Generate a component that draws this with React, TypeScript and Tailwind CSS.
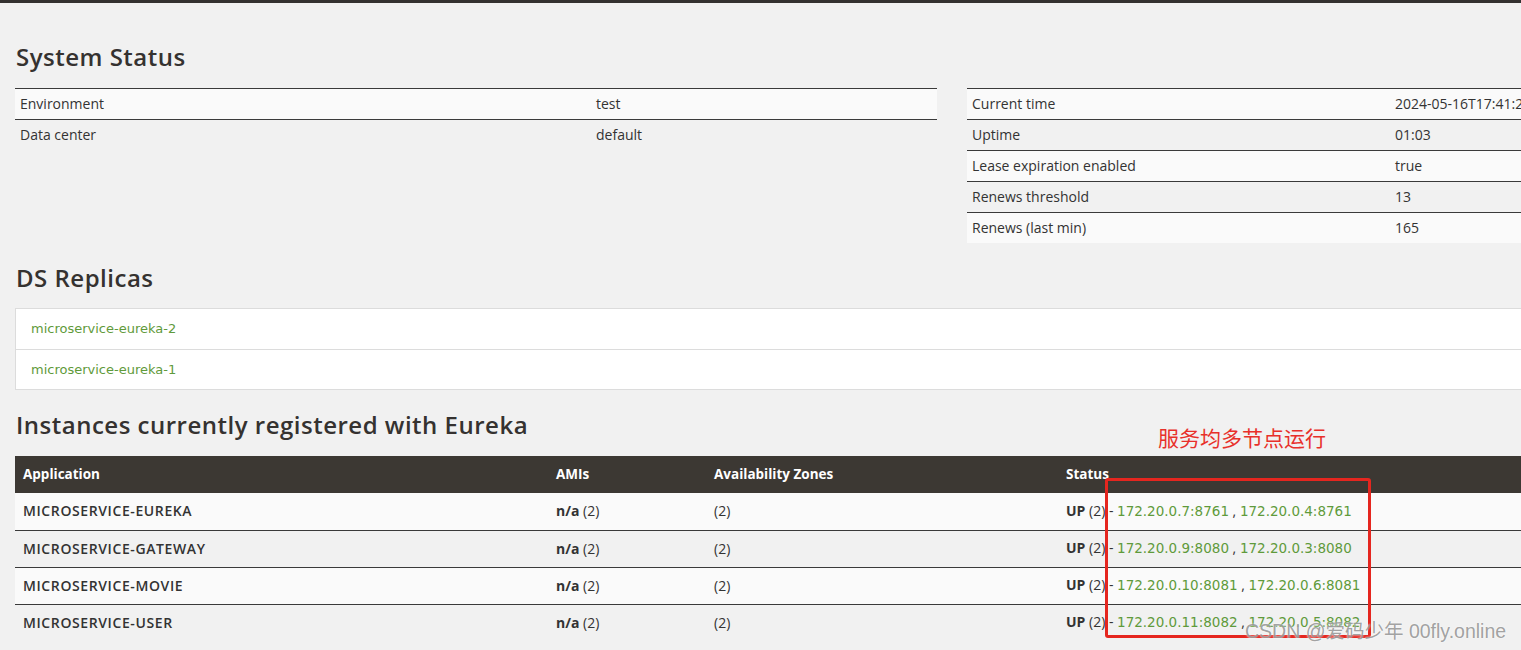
import React from 'react';

const generalInfo = [
  ['Environment', 'test'],
  ['Data center', 'default'],
];

const statusInfo = [
  ['Current time', '2024-05-16T17:41:22 +0800'],
  ['Uptime', '01:03'],
  ['Lease expiration enabled', 'true'],
  ['Renews threshold', '13'],
  ['Renews (last min)', '165'],
];

const replicas = ['microservice-eureka-2', 'microservice-eureka-1'];

const instances = [
  { app: 'MICROSERVICE-EUREKA', hosts: ['172.20.0.7:8761', '172.20.0.4:8761'] },
  { app: 'MICROSERVICE-GATEWAY', hosts: ['172.20.0.9:8080', '172.20.0.3:8080'] },
  { app: 'MICROSERVICE-MOVIE', hosts: ['172.20.0.10:8081', '172.20.0.6:8081'] },
  { app: 'MICROSERVICE-USER', hosts: ['172.20.0.11:8082', '172.20.0.5:8082'] },
];

const linkFont = { fontFamily: '"DejaVu Sans", "Open Sans", sans-serif' };

function Heading({ children }: { children: React.ReactNode }) {
  return (
    <h2 className="text-[24px] leading-[30px] font-semibold text-[#353230] tracking-[0.5px] pl-px">
      {children}
    </h2>
  );
}

function InfoTable({ rows, labelWidth }: { rows: string[][]; labelWidth: string }) {
  return (
    <div className="flex flex-col">
      {rows.map(([label, value], i) => (
        <div
          key={label}
          className={`flex h-[31px] items-center pb-[2px] border-t border-[#3a3a3a] text-[14px] text-[#333] ${
            i % 2 === 0 ? 'bg-[#fafafa]' : 'bg-[#f1f1f1]'
          }`}
        >
          <div className={`${labelWidth} pl-[5px] shrink-0`}>{label}</div>
          <div className="whitespace-nowrap">{value}</div>
        </div>
      ))}
    </div>
  );
}

export default function App() {
  return (
    <div
      className="relative min-h-screen w-full overflow-hidden bg-[#f1f1f1]"
      style={{ fontFamily: '"Open Sans", "Noto Sans", sans-serif' }}
    >
      <div className="h-[3px] w-full bg-[#333130]" />
      <div className="w-[1904px] px-[15px]">
        <div className="mt-[39px] mb-[16px]">
          <Heading>System Status</Heading>
        </div>
        <div className="grid grid-cols-2 gap-[30px] items-start">
          <InfoTable rows={generalInfo} labelWidth="w-[581px]" />
          <InfoTable rows={statusInfo} labelWidth="w-[428px]" />
        </div>

        <div className="mt-[20px] mb-[15px]">
          <Heading>DS Replicas</Heading>
        </div>
        <div className="border border-[#dcdcdc] bg-white">
          {replicas.map((r, i) => (
            <div
              key={r}
              className={`flex h-[40px] items-center pl-[15px] text-[13px] text-[#5f9a3b] ${
                i > 0 ? 'border-t border-[#dcdcdc]' : ''
              }`}
              style={linkFont}
            >
              {r}
            </div>
          ))}
        </div>

        <div className="mt-[20px] mb-[16px]">
          <Heading>Instances currently registered with Eureka</Heading>
        </div>
        <div className="flex flex-col text-[14px]">
          <div className="flex h-[37px] items-center bg-[#3c3833] text-[13.5px] font-bold text-white">
            <div className="w-[533px] pl-[8px]">Application</div>
            <div className="w-[158px] pl-[8px]">AMIs</div>
            <div className="w-[352px] pl-[8px]">Availability Zones</div>
            <div className="pl-[8px]">Status</div>
          </div>
          {instances.map((row, i) => (
            <div
              key={row.app}
              className={`flex h-[37px] items-center pb-[2px] text-[#333] ${
                i > 0 ? 'border-t border-[#3a3a3a]' : ''
              } ${i % 2 === 0 ? 'bg-[#fafafa]' : 'bg-[#f1f1f1]'}`}
            >
              <div className="w-[533px] pl-[8px] font-semibold tracking-[0.6px]">{row.app}</div>
              <div className="w-[158px] pl-[8px]">
                <b className="font-bold">n/a</b> (2)
              </div>
              <div className="w-[352px] pl-[8px]">(2)</div>
              <div className="pl-[8px] whitespace-nowrap">
                <b className="font-bold">UP</b> (2) -{' '}
                <span className="text-[13.5px] text-[#5f9a3b]" style={linkFont}>
                  {row.hosts[0]}
                </span>{' '}
                ,{' '}
                <span className="text-[13.5px] text-[#5f9a3b]" style={linkFont}>
                  {row.hosts[1]}
                </span>
              </div>
            </div>
          ))}
        </div>
      </div>

      {/* annotation overlay */}
      <div
        className="absolute left-[1158px] top-[422px] text-[21px] leading-[30px] text-[#e8302a]"
        style={{ fontFamily: '"Noto Sans CJK SC", sans-serif' }}
      >
        服务均多节点运行
      </div>
      <div className="absolute left-[1105px] top-[478px] h-[160px] w-[266px] rounded-[3px] border-[3px] border-[#e5261f]" />
      <div
        className="absolute left-[1245px] top-[616px] whitespace-nowrap text-[19.5px] leading-[30px] text-[#8a8a8a]/80"
        style={{ fontFamily: '"Liberation Sans", "Noto Sans CJK SC", sans-serif', textShadow: '0 0 2px #fff' }}
      >
        CSDN @爱码少年 00fly.online
      </div>
    </div>
  );
}
